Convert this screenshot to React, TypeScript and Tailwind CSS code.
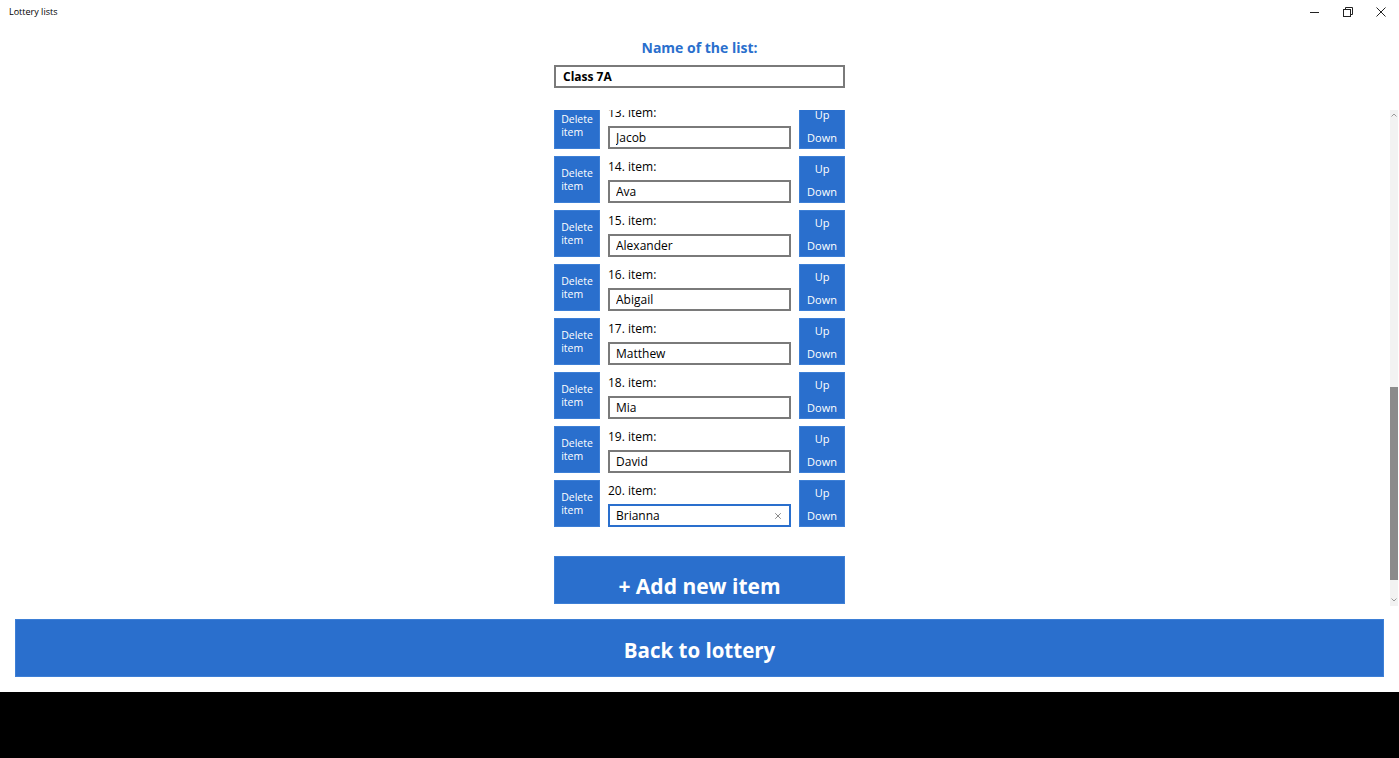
import { useLayoutEffect, useRef } from "react";
import { X } from "lucide-react";

const names = [
  "Emma", "Noah", "Olivia", "Liam", "Sophia", "Mason", "Isabella", "William",
  "Emily", "James", "Madison", "Ethan", "Jacob", "Ava", "Alexander", "Abigail",
  "Matthew", "Mia", "David", "Brianna",
];

const font = { fontFamily: '"Open Sans", "Noto Sans", sans-serif' };

function ItemRow({ index, name, focused }: { index: number; name: string; focused?: boolean }) {
  return (
    <div className="flex h-[47px] gap-2">
      <button className="flex w-[46px] items-center justify-center border border-[#3d7fd6] bg-[#2a6fcd] text-[10.5px] leading-[13px] text-white">
        <span className="text-left">
          Delete
          <br />
          item
        </span>
      </button>
      <div className="flex w-[183px] flex-col justify-between">
        <div className="pt-[3px] text-[12px] leading-[16px] text-black">{index}. item:</div>
        <div
          className={`flex h-[23px] items-center border-2 bg-white pl-[6px] pr-[6px] ${
            focused ? "border-[#2a6fcd]" : "border-[#7a7a7a]"
          }`}
        >
          <input
            defaultValue={name}
            readOnly
            className="w-full min-w-0 bg-transparent text-[12px] text-black outline-none"
            style={font}
          />
          {focused && <X size={10} strokeWidth={1.5} className="shrink-0 text-[#444]" />}
        </div>
      </div>
      <button className="flex w-[46px] flex-col items-center gap-[7px] border border-[#3d7fd6] bg-[#2a6fcd] pt-[4px] text-[11px] leading-[16px] text-white">
        <span>Up</span>
        <span>Down</span>
      </button>
    </div>
  );
}

export default function App() {
  const listRef = useRef<HTMLDivElement>(null);

  useLayoutEffect(() => {
    const el = listRef.current;
    if (el) el.scrollTop = el.scrollHeight;
  }, []);

  return (
    <div className="flex h-[758px] w-full flex-col bg-black" style={font}>
      <main className="flex h-[692px] flex-col bg-white">
        <div className="flex h-[24px] items-center justify-between">
          <span className="pl-[9px] text-[9px] text-black">Lottery lists</span>
          <div className="flex h-full items-center">
            <div className="flex w-[34px] justify-center">
              <div className="h-px w-[9px] bg-[#222]" />
            </div>
            <div className="flex w-[34px] justify-center">
              <svg width="10" height="10" viewBox="0 0 10 10" fill="none" stroke="#222" strokeWidth="1">
                <rect x="0.5" y="2.5" width="7" height="7" />
                <path d="M2.5 2.5V0.5H9.5V7.5H7.5" />
              </svg>
            </div>
            <div className="flex w-[34px] justify-center pr-[2px]">
              <svg width="10" height="10" viewBox="0 0 10 10" fill="none" stroke="#222" strokeWidth="1">
                <path d="M0.5 0.5L9.5 9.5M9.5 0.5L0.5 9.5" />
              </svg>
            </div>
          </div>
        </div>

        <h1 className="mt-[14px] text-center text-[14px] font-bold leading-[20px] text-[#2a6fcd]">
          Name of the list:
        </h1>
        <div className="mx-auto mt-[7px] flex h-[23px] w-[291px] items-center border-2 border-[#7a7a7a] px-[7px]">
          <input
            defaultValue="Class 7A"
            readOnly
            className="w-full bg-transparent text-[12px] font-bold text-black outline-none"
            style={font}
          />
        </div>

        <div className="relative mt-[22px] h-[496px]">
          <div ref={listRef} className="h-full overflow-hidden">
            <div className="flex flex-col items-center pb-[2px] pt-[8px]">
              <div className="flex flex-col gap-[7px]">
                {names.map((n, i) => (
                  <ItemRow key={i} index={i + 1} name={n} focused={i === names.length - 1} />
                ))}
              </div>
              <button className="mt-[29px] flex h-[48px] w-[291px] items-center justify-center border border-[#3d7fd6] bg-[#2a6fcd] pt-[11px] text-[21px] font-bold leading-[28px] text-white">
                + Add new item
              </button>
            </div>
          </div>

          <div className="absolute bottom-0 right-px top-0 flex w-[8px] flex-col items-center bg-[#f2f2f2]">
            <svg width="6" height="4" viewBox="0 0 6 4" className="mt-[3px]" fill="none" stroke="#999" strokeWidth="1">
              <path d="M0.5 3.5L3 1L5.5 3.5" />
            </svg>
            <div className="mt-[270px] h-[193px] w-full bg-[#8b8b8b]" />
            <svg width="6" height="4" viewBox="0 0 6 4" className="mt-[18px]" fill="none" stroke="#999" strokeWidth="1">
              <path d="M0.5 0.5L3 3L5.5 0.5" />
            </svg>
          </div>
        </div>

        <button className="mx-[15px] mt-[13px] flex h-[58px] items-center justify-center border border-[#3d7fd6] bg-[#2a6fcd] pt-[4px] text-[20.5px] font-bold text-white">
          Back to lottery
        </button>
      </main>
    </div>
  );
}
